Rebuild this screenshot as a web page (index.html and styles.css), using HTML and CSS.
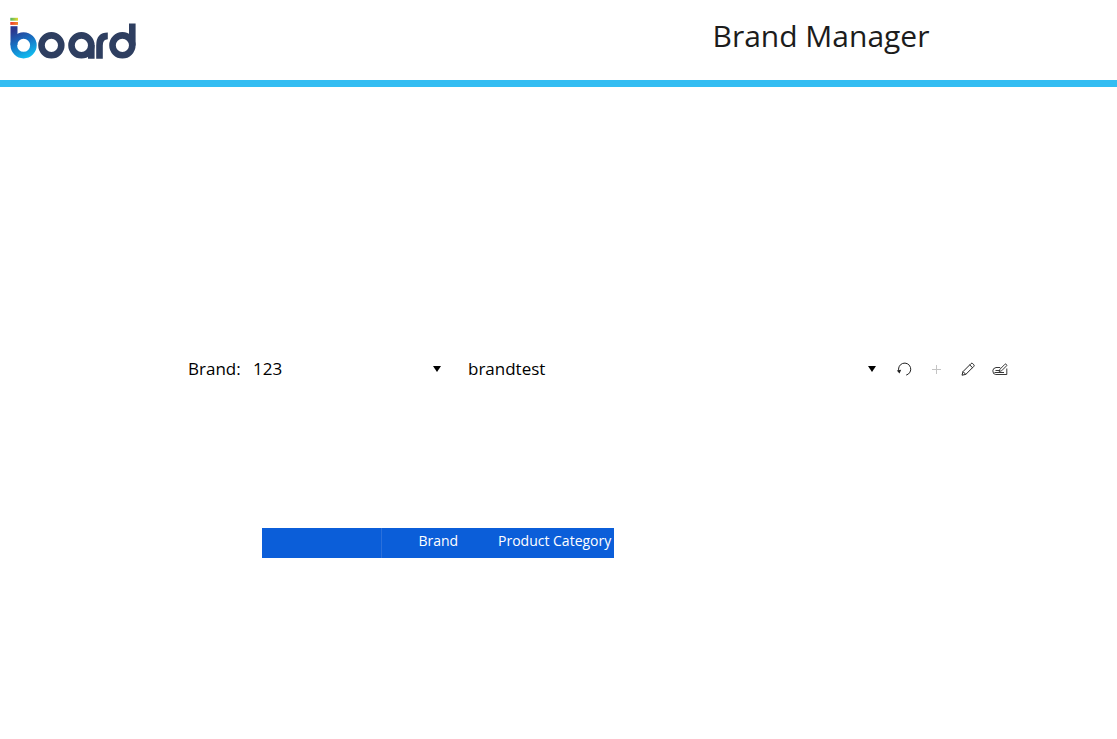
FILE: index.html
```html
<!DOCTYPE html>
<html lang="en">
<head>
<meta charset="utf-8">
<meta name="viewport" content="width=device-width, initial-scale=1">
<title>Brand Manager</title>
<link rel="stylesheet" href="styles.css">
</head>
<body>
<header class="header">
  <svg class="logo" viewBox="0 0 128 44" role="img" aria-label="board">
    <defs>
      <linearGradient id="blue" gradientUnits="userSpaceOnUse" x1="4" y1="10" x2="18" y2="42">
        <stop offset="0.1" stop-color="#2b3990"/><stop offset="0.5" stop-color="#1672c4"/><stop offset="1" stop-color="#10c4f4"/>
      </linearGradient>
      <linearGradient id="green"><stop offset="0" stop-color="#4db562"/><stop offset="1" stop-color="#e6d92e"/></linearGradient>
      <linearGradient id="red"><stop offset="0" stop-color="#ee3a2c"/><stop offset="1" stop-color="#f58a2a"/></linearGradient>
    </defs>
    <rect x="0.3" y="0.8" width="7.7" height="2.9" fill="url(#green)"/>
    <rect x="0.3" y="5" width="7.7" height="2.9" fill="url(#red)"/>
    <rect x="0.5" y="9.2" width="7" height="19" fill="url(#blue)"/>
    <g fill="none" stroke="url(#blue)" stroke-width="6.6"><circle cx="13.6" cy="28.3" r="9.8"/></g>
    <g fill="none" stroke="#2e3e60" stroke-width="6.6">
      <circle cx="41.4" cy="28.3" r="9.9"/>
      <circle cx="71.4" cy="28.3" r="9.9"/>
      <circle cx="112.4" cy="28.3" r="9.9"/>
      <path d="M81.3 28v13.7M89.5 41.7V28.5Q89.5 18.9 97.8 18.9M122.3 6.6v22"/>
    </g>
  </svg>
  <h1 class="title">Brand Manager</h1>
</header>
<main class="main">
  <form class="selector">
    <label class="label" for="code">Brand:</label>
    <div class="field field-code">
      <select class="select" id="code"><option>123</option></select>
      <svg class="arrow" viewBox="0 0 8 6" aria-hidden="true"><path d="M0 0h8L4 6z"/></svg>
    </div>
    <div class="field field-name">
      <select class="select" aria-label="Brand name"><option>brandtest</option></select>
      <svg class="arrow" viewBox="0 0 8 6" aria-hidden="true"><path d="M0 0h8L4 6z"/></svg>
    </div>
    <div class="actions">
      <button class="action" type="button" aria-label="Reset">
        <svg viewBox="0 0 16 16"><path d="M10.2 14.1A6.1 6.1 0 1 0 3 10.5"/><path d="M.8 9.6l4.4-.8-1.7 3.6z" fill="currentColor" stroke="none"/></svg>
      </button>
      <button class="action" type="button" aria-label="Add" disabled>
        <svg viewBox="0 0 16 16"><path d="M8.5 4v9M4 8.5h9"/></svg>
      </button>
      <button class="action" type="button" aria-label="Edit">
        <svg viewBox="0 0 16 16"><path d="M2 14.2l1-3.6 8-8q.8-.8 1.7 0l1.1 1.1q.8.8 0 1.7l-8 8zM3 10.6l2.8 2.8M9.7 3.9l2.8 2.8"/></svg>
      </button>
      <button class="action" type="button" aria-label="Edit details">
        <svg viewBox="0 0 16 16"><path d="M8.2 6.5H4Q.8 7.2.8 9.8q0 3.7 3 3.7h11V7.5M3.5 9.5h3.7M2.5 11.5H12M7.2 10.5l.8-2.3 5-5q.6-.5 1.1 0l.5.5q.5.5 0 1.1l-5 5z" stroke-width="0.9"/></svg>
      </button>
    </div>
  </form>
  <table class="table">
    <thead>
      <tr><td class="corner"></td><th class="brand" scope="col">Brand</th><th class="category" scope="col">Product Category</th></tr>
    </thead>
  </table>
</main>
</body>
</html>
```
FILE: styles.css
```css
* { box-sizing: border-box; }

body {
  margin: 0;
  background: #fff;
  color: #000;
  font-family: "Open Sans", "Noto Sans", sans-serif;
}

.header {
  display: grid;
  grid-template-columns: 47% 1fr;
  align-items: start;
  height: 87px;
  padding-top: 17px;
  border-bottom: 7px solid #34bdf2;
}

.logo {
  display: block;
  width: 128px;
  height: 44px;
  margin-left: 10px;
}

.title {
  margin: 0;
  color: #1c1c1c;
  font-size: 30px;
  font-weight: 400;
  line-height: 38px;
  text-align: center;
}

.main { padding: 270px 109px 40px 188px; }

.selector {
  display: flex;
  align-items: center;
  font-size: 17px;
  line-height: 24px;
}

.label { width: 65px; }

.field {
  display: flex;
  align-items: center;
}

.field-code {
  width: 188px;
  margin-right: 27px;
}

.field-name {
  flex: 1;
  margin-right: 20px;
}

.select {
  flex: 1;
  min-width: 0;
  height: 24px;
  margin: 0;
  padding: 0;
  border: 0;
  appearance: none;
  background: transparent;
  color: inherit;
  font: inherit;
}

.arrow {
  width: 8px;
  height: 6px;
  pointer-events: none;
}

.actions {
  display: flex;
  gap: 16px;
}

.action {
  width: 16px;
  height: 16px;
  padding: 0;
  border: 0;
  background: none;
  color: #222;
}

.action:disabled { color: #c4c4c4; }

.action svg {
  display: block;
  width: 16px;
  height: 16px;
  fill: none;
  stroke: currentColor;
}

.table {
  margin: 147px 0 0 74px;
  border-collapse: collapse;
  background: #0b5ed9;
  color: #fff;
  font-size: 14px;
  line-height: 20px;
}

.table td,
.table th {
  height: 30px;
  padding: 3px 3px 7px;
  font-weight: 400;
  text-align: center;
}

.table .corner {
  width: 119px;
  border-right: 1px solid #2a70dc;
}

.table .brand { width: 114px; }

.table .category { width: 119px; white-space: nowrap; text-align: right; }
```
